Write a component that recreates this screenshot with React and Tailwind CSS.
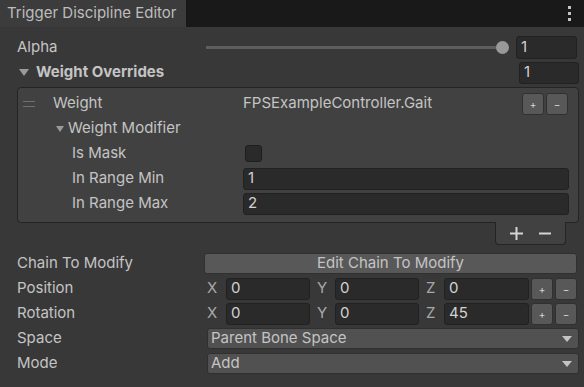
import React from "react";

const font = { fontFamily: "Inter, 'Noto Sans', sans-serif" };

function Field({ value, className = "" }) {
  return (
    <div
      className={`h-[22px] rounded-[3px] bg-[#2a2a2a] border border-[#212121] flex items-center pl-[4px] text-[15px] text-[#d2d2d2] ${className}`}
    >
      {value}
    </div>
  );
}

function SmallBtn({ children }) {
  return (
    <div className="w-[22px] h-[22px] rounded-[3px] bg-[#585858] border border-[#303030] flex items-center justify-center text-[10px] text-[#d6d6d6] leading-none">
      {children}
    </div>
  );
}

function Tri({ className = "", w = 10, h = 7 }) {
  return (
    <svg width={w} height={h} viewBox={`0 0 ${w} ${h}`} className={className}>
      <polygon points={`0,0 ${w},0 ${w / 2},${h}`} fill="#9a9a9a" />
    </svg>
  );
}

function Label({ children, w = "w-[187px]" }) {
  return <div className={`${w} shrink-0 text-[15px] text-[#c4c4c4]`}>{children}</div>;
}

function Dropdown({ value }) {
  return (
    <div className="ml-[3px] flex-1 h-[21px] rounded-[3px] bg-[#515151] border border-[#303030] flex items-center pl-[3px] pr-[6px] text-[15px] text-[#c4c4c4]">
      <span className="flex-1">{value}</span>
      <svg width="10" height="6" viewBox="0 0 10 6">
        <polygon points="0,0 10,0 5,6" fill="#c4c4c4" />
      </svg>
    </div>
  );
}

function VecRow({ label, x, y, z }) {
  return (
    <div className="h-[25px] flex items-center">
      <Label>{label}</Label>
      <div className="w-[22px] pl-[3px] text-[15px] text-[#a8a8a8]">X</div>
      <Field value={x} className="w-[84px]" />
      <div className="w-[25px] pl-[7px] text-[15px] text-[#a8a8a8]">Y</div>
      <Field value={y} className="w-[84px]" />
      <div className="w-[25px] pl-[7px] text-[15px] text-[#a8a8a8]">Z</div>
      <Field value={z} className="w-[85px]" />
      <div className="ml-[2px] flex gap-[2px]">
        <SmallBtn>+</SmallBtn>
        <SmallBtn>−</SmallBtn>
      </div>
    </div>
  );
}

export default function App() {
  return (
    <div style={font} className="w-[584px] h-[387px] bg-[#383838] overflow-hidden">
      {/* tab bar */}
      <div className="h-[27px] bg-[#191919] flex">
        <div className="w-[186px] bg-[#3c3c3c] flex items-center pl-[7px] text-[15px] text-[#bdbdbd]">
          Trigger Discipline Editor
        </div>
        <div className="flex-1" />
        <div className="w-[14px] mr-[8px] flex flex-col items-center justify-center gap-[3px]">
          <div className="w-[3px] h-[3px] bg-[#c4c4c4]" />
          <div className="w-[3px] h-[3px] bg-[#c4c4c4]" />
          <div className="w-[3px] h-[3px] bg-[#c4c4c4]" />
        </div>
      </div>

      <div className="pl-[17px] pr-[5px] pt-[8px]">
        {/* Alpha */}
        <div className="h-[25px] flex items-center">
          <Label>Alpha</Label>
          <div className="flex items-center ml-[2px]">
            <div className="w-[297px] h-[3px] bg-[#5e5e5e]" />
            <div className="-ml-[7px] w-[13px] h-[13px] rounded-full bg-[#999999]" />
          </div>
          <div className="flex-1" />
          <Field value="1" className="w-[61px] h-[23px] mr-[2px]" />
        </div>

        {/* Weight Overrides */}
        <div className="h-[25px] flex items-center">
          <Tri className="ml-[2px] mr-[7px]" />
          <div className="flex-1 text-[15px] font-bold text-[#c4c4c4]">Weight Overrides</div>
          <Field value="1" className="w-[60px]" />
        </div>

        {/* List box */}
        <div className="mt-[2px] rounded-[4px] border border-[#242424] bg-[#414141] pt-[3px] pb-[6px] pr-[9px]">
          <div className="h-[25px] flex items-center">
            <div className="ml-[5px] w-[12px] flex flex-col gap-[4px]">
              <div className="h-[1px] bg-[#707070]" />
              <div className="h-[1px] bg-[#707070]" />
            </div>
            <div className="ml-[18px] w-[190px] text-[15px] text-[#c4c4c4]">Weight</div>
            <div className="flex-1 text-[15px] text-[#c4c4c4]">FPSExampleController.Gait</div>
            <div className="flex gap-[2px] mr-[1px]">
              <SmallBtn>+</SmallBtn>
              <SmallBtn>−</SmallBtn>
            </div>
          </div>
          <div className="h-[25px] flex items-center pl-[38px]">
            <Tri className="mr-[4px]" w={8} h={6} />
            <div className="text-[15px] text-[#c4c4c4]">Weight Modifier</div>
          </div>
          <div className="h-[25px] flex items-center pl-[54px]">
            <div className="w-[172px] text-[15px] text-[#c4c4c4]">Is Mask</div>
            <div className="ml-[1px] w-[17px] h-[17px] rounded-[3px] bg-[#2a2a2a] border border-[#1e1e1e]" />
          </div>
          <div className="h-[25px] flex items-center pl-[54px]">
            <div className="w-[171px] text-[15px] text-[#c4c4c4]">In Range Min</div>
            <Field value="1" className="flex-1" />
          </div>
          <div className="h-[25px] flex items-center pl-[54px]">
            <div className="w-[171px] text-[15px] text-[#c4c4c4]">In Range Max</div>
            <Field value="2" className="flex-1" />
          </div>
        </div>

        {/* footer */}
        <div className="flex justify-end pr-[13px]">
          <div className="-mt-[1px] w-[71px] h-[23px] bg-[#414141] border border-t-0 border-[#242424] rounded-b-[4px] flex items-center justify-around px-[6px]">
            <svg width="13" height="13" viewBox="0 0 13 13">
              <rect x="0" y="5.5" width="13" height="2" fill="#d4d4d4" />
              <rect x="5.5" y="0" width="2" height="13" fill="#d4d4d4" />
            </svg>
            <svg width="12" height="13" viewBox="0 0 12 13">
              <rect x="0" y="5.5" width="12" height="2" fill="#d4d4d4" />
            </svg>
          </div>
        </div>

        <div className="mt-[6px]">
          <div className="h-[25px] flex items-center">
            <Label>Chain To Modify</Label>
            <div className="flex-1 mr-[2px] h-[21px] rounded-[3px] bg-[#585858] border border-[#303030] flex items-center justify-center text-[15px] text-[#c4c4c4]">
              Edit Chain To Modify
            </div>
          </div>
          <VecRow label="Position" x="0" y="0" z="0" />
          <VecRow label="Rotation" x="0" y="0" z="45" />
          <div className="h-[25px] flex items-center">
            <Label>Space</Label>
            <Dropdown value="Parent Bone Space" />
          </div>
          <div className="h-[25px] flex items-center">
            <Label>Mode</Label>
            <Dropdown value="Add" />
          </div>
        </div>
      </div>
    </div>
  );
}
